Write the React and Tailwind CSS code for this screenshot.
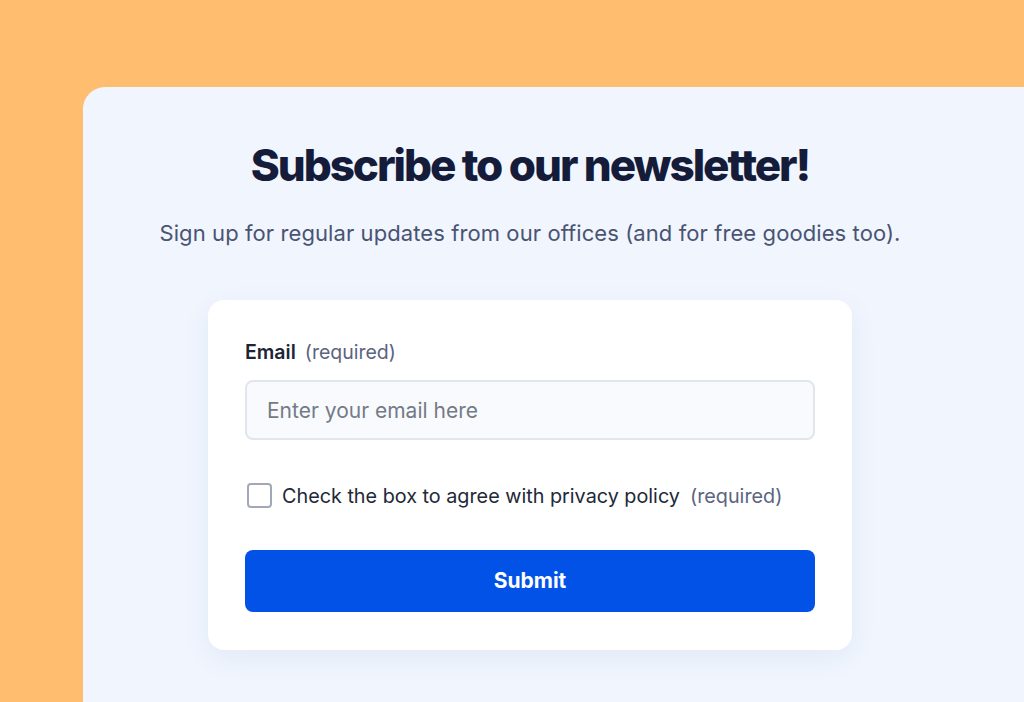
export default function App() {
  return (
    <div
      className="min-h-[702px] w-full overflow-hidden bg-[#FFBD6F] pt-[87px] pl-[83px]"
      style={{ fontFamily: "Inter, 'Noto Sans', sans-serif" }}
    >
      <div className="min-h-[640px] w-[1000px] rounded-tl-[22px] bg-[#F0F5FE]">
        <div className="flex w-[894px] flex-col items-center pt-[52px]">
          <h1 className="text-[44px] font-extrabold leading-[52px] tracking-[-0.047em] text-[#151C39]">
            Subscribe to our newsletter!
          </h1>
          <p className="mt-[27px] text-[22px] leading-[30px] tracking-[0.004em] text-[#4A5472]">
            Sign up for regular updates from our offices (and for free goodies too).
          </p>

          <form
            className="mt-[52px] w-[644px] rounded-[16px] bg-white px-[37px] pt-[40px] pb-[38px] shadow-[0_8px_30px_rgba(30,60,120,0.06)]"
            onSubmit={(e) => e.preventDefault()}
          >
            <label className="flex items-baseline gap-[9px] text-[19.5px] leading-[24px]">
              <span className="font-semibold text-[#1E2436]">Email</span>
              <span className="text-[#5B6480]">(required)</span>
            </label>
            <input
              type="email"
              placeholder="Enter your email here"
              className="mt-[16px] h-[60px] w-full rounded-[8px] border-2 border-[#E1E5EC] bg-[#F8FAFD] px-[20px] text-[21px] text-[#1E2436] placeholder:text-[#747A86] focus:outline-none"
            />

            <label className="mt-[43px] flex items-center gap-[10px] text-[19.8px] leading-[24px]">
              <span className="ml-[2px] h-[25px] w-[25px] shrink-0 rounded-[4px] border-2 border-[#A3A8B8] bg-white" />
              <span className="text-[#222838]">Check the box to agree with privacy policy</span>
              <span className="text-[#5B6480]">(required)</span>
            </label>

            <button
              type="submit"
              className="mt-[42px] h-[62px] w-full rounded-[8px] bg-[#0352E8] text-[21px] font-bold text-white"
            >
              Submit
            </button>
          </form>
        </div>
      </div>
    </div>
  );
}
